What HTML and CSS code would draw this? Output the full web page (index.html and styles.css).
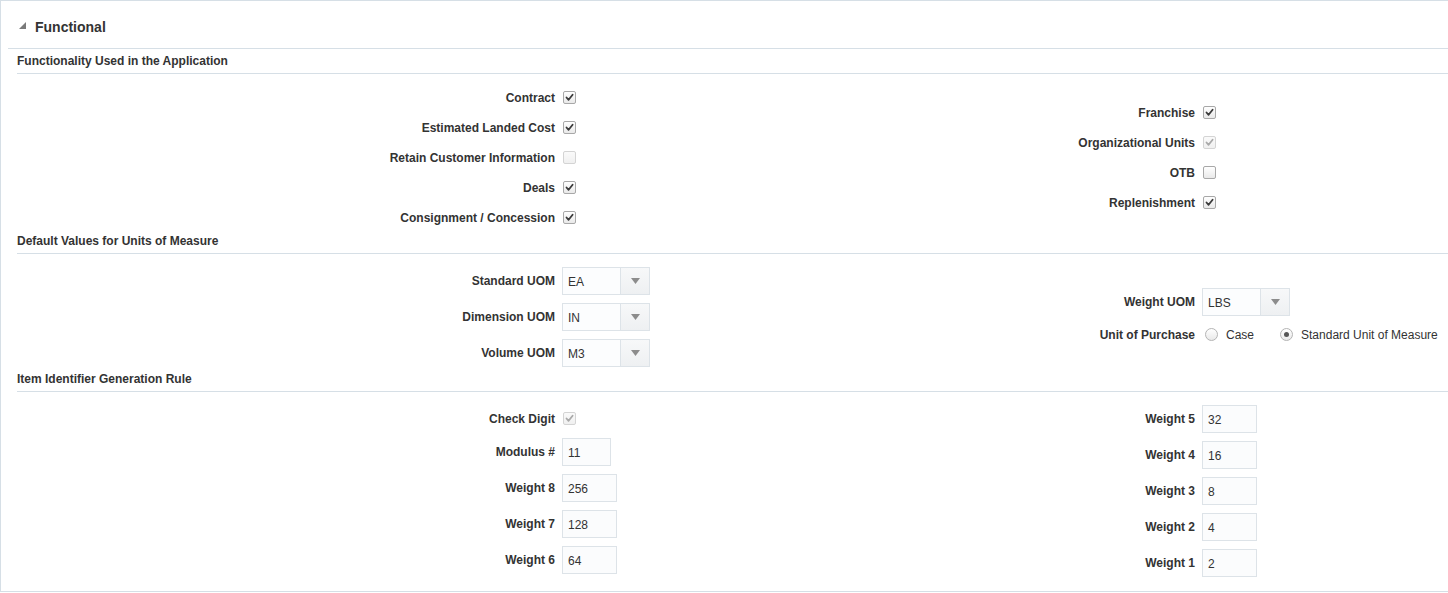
FILE: index.html
```html
<!DOCTYPE html>
<html>
<head>
<meta charset="utf-8">
<link rel="stylesheet" href="styles.css">
</head>
<body>
<div class="panel">
  <div class="panel-header">
    <svg class="disclosure" width="8" height="8" viewBox="0 0 8 8"><polygon points="7,0 7,7 0,7" fill="#7a7a7a"/></svg>
    <span class="panel-title">Functional</span>
  </div>

  <div class="section">
    <div class="section-header">Functionality Used in the Application</div>
    <div class="form">
      <div class="col">
        <div class="row r30"><label class="lbl">Contract</label><div class="fld"><span class="cb on"><svg viewBox="0 0 11 11"><path d="M2.5 5.5 L4.6 7.8 L8.6 2.8"/></svg></span></div></div>
        <div class="row r30"><label class="lbl">Estimated Landed Cost</label><div class="fld"><span class="cb on"><svg viewBox="0 0 11 11"><path d="M2.5 5.5 L4.6 7.8 L8.6 2.8"/></svg></span></div></div>
        <div class="row r30"><label class="lbl">Retain Customer Information</label><div class="fld"><span class="cb dis"></span></div></div>
        <div class="row r30"><label class="lbl">Deals</label><div class="fld"><span class="cb on"><svg viewBox="0 0 11 11"><path d="M2.5 5.5 L4.6 7.8 L8.6 2.8"/></svg></span></div></div>
        <div class="row r30"><label class="lbl">Consignment / Concession</label><div class="fld"><span class="cb on"><svg viewBox="0 0 11 11"><path d="M2.5 5.5 L4.6 7.8 L8.6 2.8"/></svg></span></div></div>
      </div>
      <div class="col">
        <div class="row r30"><label class="lbl">Franchise</label><div class="fld"><span class="cb on"><svg viewBox="0 0 11 11"><path d="M2.5 5.5 L4.6 7.8 L8.6 2.8"/></svg></span></div></div>
        <div class="row r30"><label class="lbl">Organizational Units</label><div class="fld"><span class="cb dis on"><svg viewBox="0 0 11 11"><path d="M2.5 5.5 L4.6 7.8 L8.6 2.8"/></svg></span></div></div>
        <div class="row r30"><label class="lbl">OTB</label><div class="fld"><span class="cb"></span></div></div>
        <div class="row r30"><label class="lbl">Replenishment</label><div class="fld"><span class="cb on"><svg viewBox="0 0 11 11"><path d="M2.5 5.5 L4.6 7.8 L8.6 2.8"/></svg></span></div></div>
      </div>
    </div>
  </div>

  <div class="section">
    <div class="section-header">Default Values for Units of Measure</div>
    <div class="form">
      <div class="col">
        <div class="row r36"><label class="lbl">Standard UOM</label><div class="fld"><div class="select"><span class="sel-val">EA</span><span class="sel-btn"><svg width="9" height="6" viewBox="0 0 9 6"><polygon points="0,0 9,0 4.5,6" fill="#8c8c8c"/></svg></span></div></div></div>
        <div class="row r36"><label class="lbl">Dimension UOM</label><div class="fld"><div class="select"><span class="sel-val">IN</span><span class="sel-btn"><svg width="9" height="6" viewBox="0 0 9 6"><polygon points="0,0 9,0 4.5,6" fill="#8c8c8c"/></svg></span></div></div></div>
        <div class="row r36"><label class="lbl">Volume UOM</label><div class="fld"><div class="select"><span class="sel-val">M3</span><span class="sel-btn"><svg width="9" height="6" viewBox="0 0 9 6"><polygon points="0,0 9,0 4.5,6" fill="#8c8c8c"/></svg></span></div></div></div>
      </div>
      <div class="col">
        <div class="row r36"><label class="lbl">Weight UOM</label><div class="fld"><div class="select"><span class="sel-val">LBS</span><span class="sel-btn"><svg width="9" height="6" viewBox="0 0 9 6"><polygon points="0,0 9,0 4.5,6" fill="#8c8c8c"/></svg></span></div></div></div>
        <div class="row r30"><label class="lbl">Unit of Purchase</label><div class="fld radios">
          <span class="radio-item"><span class="rb"></span><span class="rtext">Case</span></span>
          <span class="radio-item"><span class="rb sel"></span><span class="rtext">Standard Unit of Measure</span></span>
        </div></div>
      </div>
    </div>
  </div>

  <div class="section last">
    <div class="section-header">Item Identifier Generation Rule</div>
    <div class="form">
      <div class="col">
        <div class="row r30"><label class="lbl">Check Digit</label><div class="fld"><span class="cb dis on"><svg viewBox="0 0 11 11"><path d="M2.5 5.5 L4.6 7.8 L8.6 2.8"/></svg></span></div></div>
        <div class="row r36"><label class="lbl">Modulus #</label><div class="fld"><span class="inp narrow">11</span></div></div>
        <div class="row r36"><label class="lbl">Weight 8</label><div class="fld"><span class="inp">256</span></div></div>
        <div class="row r36"><label class="lbl">Weight 7</label><div class="fld"><span class="inp">128</span></div></div>
        <div class="row r36"><label class="lbl">Weight 6</label><div class="fld"><span class="inp">64</span></div></div>
      </div>
      <div class="col">
        <div class="row r36"><label class="lbl">Weight 5</label><div class="fld"><span class="inp">32</span></div></div>
        <div class="row r36"><label class="lbl">Weight 4</label><div class="fld"><span class="inp">16</span></div></div>
        <div class="row r36"><label class="lbl">Weight 3</label><div class="fld"><span class="inp">8</span></div></div>
        <div class="row r36"><label class="lbl">Weight 2</label><div class="fld"><span class="inp">4</span></div></div>
        <div class="row r36"><label class="lbl">Weight 1</label><div class="fld"><span class="inp">2</span></div></div>
      </div>
    </div>
  </div>
</div>
</body>
</html>
```

FILE: styles.css
```css
html, body {
  margin: 0;
  padding: 0;
  background: #ffffff;
}
body {
  font-family: "Liberation Sans", Arial, sans-serif;
  font-size: 12px;
  color: #333333;
  width: 1448px;
  overflow: hidden;
}
.panel {
  border-top: 1px solid #d6dfe6;
  border-left: 1px solid #d6dfe6;
  border-bottom: 1px solid #d6dfe6;
  height: 590px;
  box-sizing: content-box;
}
.panel-header {
  margin-left: 7px;
  border-bottom: 1px solid #d6dfe6;
  display: flex;
  align-items: center;
  padding-left: 11px;
  box-sizing: border-box;
  height: 48px;
}
.disclosure {
  display: block;
  margin-top: 3px;
}
.panel-title {
  font-size: 14px;
  font-weight: bold;
  color: #333;
  margin-left: 8px;
  line-height: 16px;
  margin-top: 4px;
}
.section {
  padding-left: 16px;
}
.panel-header + .section {
  margin-top: 3px;
}
.section-header {
  font-weight: bold;
  font-size: 12px;
  line-height: 16px;
  box-sizing: border-box;
  padding-top: 1px;
  padding-bottom: 4px;
  border-bottom: 1px solid #d6dfe6;
  height: 22px;
  margin-bottom: 8px;
  color: #333;
}
.form {
  display: flex;
  align-items: center;
}
.col {
  width: 640px;
  display: flex;
  flex-direction: column;
}
.row {
  display: flex;
  align-items: center;
}
.r30 { height: 30px; }
.r36 { height: 36px; }
.lbl {
  width: 538px;
  padding-right: 7px;
  padding-top: 2px;
  text-align: right;
  font-weight: bold;
  white-space: nowrap;
  flex: none;
}
.fld {
  display: flex;
  align-items: center;
  white-space: nowrap;
}
.cb {
  width: 11px;
  height: 11px;
  border: 1px solid #a8a8a8;
  border-radius: 2px;
  background: linear-gradient(#ffffff, #e9e9e9);
  margin-left: 1px;
  margin-top: 1px;
  display: flex;
  align-items: center;
  justify-content: center;
  box-sizing: content-box;
}
.cb svg {
  width: 11px;
  height: 11px;
  display: block;
}
.cb svg path {
  fill: none;
  stroke: #3a3a3a;
  stroke-width: 1.8;
  stroke-linecap: round;
  stroke-linejoin: round;
}
.cb.dis {
  border-color: #d4d4d4;
  background: linear-gradient(#fafafa, #f0f0f0);
}
.cb.dis svg path {
  stroke: #a9a9a9;
}
.select {
  display: flex;
  width: 88px;
  height: 28px;
  margin-top: 1px;
  box-sizing: border-box;
  border: 1px solid #dde3e8;
  background: #fcfdfe;
}
.sel-val {
  flex: 1;
  padding-left: 5px;
  line-height: 26px;
  padding-top: 1px;
  color: #333;
}
.sel-btn {
  width: 28px;
  border-left: 1px solid #dde3e8;
  background: linear-gradient(#f7f8f9, #eef0f2);
  display: flex;
  align-items: center;
  justify-content: center;
}
.radios {
  padding-left: 3px;
  padding-top: 1px;
}
.radio-item {
  display: flex;
  align-items: center;
  margin-right: 26px;
}
.rb {
  width: 11px;
  height: 11px;
  border: 1px solid #b4b4b4;
  border-radius: 50%;
  background: linear-gradient(#ffffff, #e9e9e9);
  display: flex;
  align-items: center;
  justify-content: center;
  box-sizing: content-box;
}
.rb.sel::after {
  content: "";
  width: 5px;
  height: 5px;
  border-radius: 50%;
  background: #555;
}
.rtext {
  margin-left: 8px;
  padding-top: 1px;
  color: #333;
}
.inp {
  display: block;
  width: 55px;
  height: 28px;
  margin-top: 1px;
  box-sizing: border-box;
  border: 1px solid #dde3e8;
  background: #fbfcfd;
  padding-left: 5px;
  padding-top: 1px;
  line-height: 26px;
  color: #333;
}
.inp.narrow {
  width: 49px;
}
```
